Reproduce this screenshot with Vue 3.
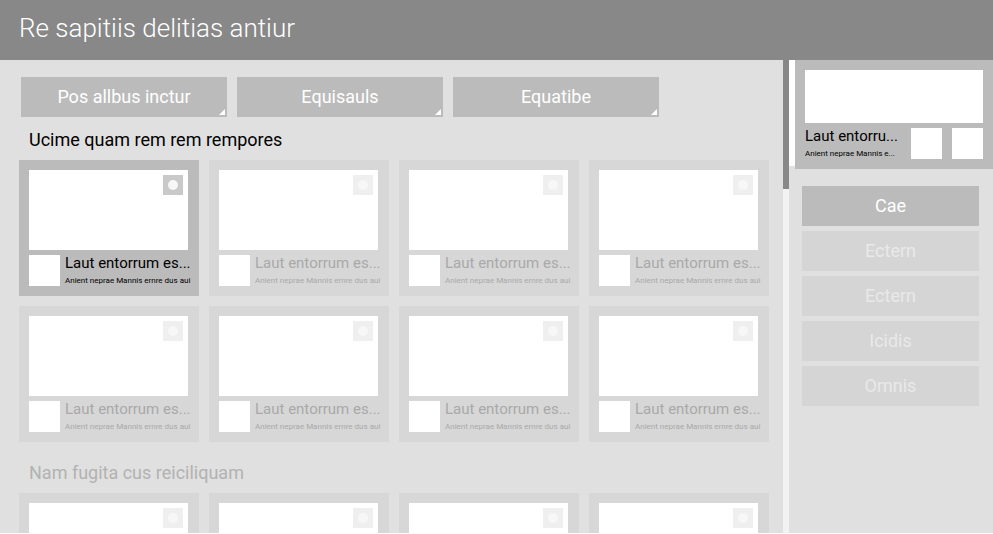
<script setup>
import { ref } from 'vue'

const filters = ['Pos allbus inctur', 'Equisauls', 'Equatibe']
const menu = ['Cae', 'Ectern', 'Ectern', 'Icidis', 'Omnis']
const sections = [
  { title: 'Ucime quam rem rem rempores', count: 8 },
  { title: 'Nam fugita cus reiciliquam', count: 4 },
]

const activeSection = ref(0)
const activeCard = ref(0)
const activeMenu = ref(0)

function selectCard(section, card) {
  activeSection.value = section
  activeCard.value = card
}
</script>

<template>
  <div class="page">
    <header class="header">
      <h1>Re sapitiis delitias antiur</h1>
    </header>

    <div class="body">
      <main class="content">
        <div class="filters">
          <button v-for="name in filters" :key="name" type="button" class="filter">
            {{ name }}
            <svg class="corner" viewBox="0 0 6 6" aria-hidden="true"><path d="M6 0V6H0Z" /></svg>
          </button>
        </div>

        <section
          v-for="(section, s) in sections"
          :key="section.title"
          class="section"
          :class="{ dimmed: s !== activeSection }"
        >
          <h2>{{ section.title }}</h2>
          <div class="grid">
            <article
              v-for="(n, c) in section.count"
              :key="n"
              class="card"
              :class="{ selected: s === activeSection && c === activeCard }"
              @click="selectCard(s, c)"
            >
              <div class="thumb"><span class="badge"><span class="dot"></span></span></div>
              <div class="info">
                <span class="square"></span>
                <div class="text">
                  <h3>Laut entorrum es...</h3>
                  <p>Anient neprae Mannis ernre dus aui</p>
                </div>
              </div>
            </article>
          </div>
        </section>
      </main>

      <div class="track"><div class="handle"></div></div>

      <aside class="side">
        <div class="preview-row">
          <div class="strip"></div>
          <div class="preview">
            <div class="preview-image"></div>
            <div class="preview-info">
              <div class="text">
                <h3>Laut entorru...</h3>
                <p>Anient neprae Mannis e...</p>
              </div>
              <span class="square"></span>
              <span class="square"></span>
            </div>
          </div>
        </div>
        <nav class="menu">
          <button
            v-for="(item, i) in menu"
            :key="i"
            type="button"
            :class="{ active: i === activeMenu }"
            @click="activeMenu = i"
          >
            {{ item }}
          </button>
        </nav>
      </aside>
    </div>
  </div>
</template>

<style>
body {
  overflow: hidden;
  background: #fff;
}
</style>

<style scoped>
.page {
  display: flex;
  flex-direction: column;
  height: calc(100vh - 1px);
  overflow: hidden;
  background: #e0e0e0;
  color: #000;
  font-family: Roboto, "Noto Sans", sans-serif;
}

h1,
h2,
h3,
p {
  margin: 0;
  font-weight: 400;
  white-space: nowrap;
}

button {
  border: 0;
  padding: 0 0 2px;
  font: inherit;
  cursor: pointer;
}

.header {
  flex: none;
  padding: 0 19px;
  background: #888;
  color: #fff;
}

.header h1 {
  font-size: 26px;
  font-weight: 300;
  line-height: 56px;
  padding-bottom: 4px;
}

.body {
  display: flex;
  flex: 1;
  min-height: 0;
}

.content {
  flex: 1;
  min-width: 0;
  overflow-y: auto;
  scrollbar-width: none;
  padding: 17px 14px 0 19px;
}

.filters {
  display: grid;
  grid-template-columns: repeat(3, 206px);
  gap: 10px;
  padding-left: 2px;
}

.filter {
  position: relative;
  height: 40px;
  background: #bbb;
  color: #fff;
  font-size: 18px;
}

.corner {
  position: absolute;
  right: 2px;
  bottom: 2px;
  width: 6px;
  height: 6px;
  fill: #fff;
}

.section h2 {
  padding: 2px 0 0 10px;
  font-size: 18px;
  line-height: 41px;
}

.section + .section {
  padding-top: 8px;
}

.dimmed h2 {
  color: #b2b2b2;
}

.grid {
  display: grid;
  grid-template-columns: repeat(4, 1fr);
  gap: 10px;
}

.card {
  min-width: 0;
  padding: 10px 11px 10px 10px;
  background: #d7d7d7;
  color: #a9a9a9;
  cursor: pointer;
}

.card.selected {
  background: #bbb;
  color: #000;
}

.thumb {
  display: flex;
  justify-content: flex-end;
  height: 80px;
  padding: 5px;
  box-sizing: border-box;
  background: #fff;
}

.badge {
  display: flex;
  align-items: center;
  justify-content: center;
  width: 20px;
  height: 20px;
  background: #efefef;
}

.dot {
  width: 10px;
  height: 10px;
  border-radius: 50%;
  background: #f7f7f7;
}

.selected .badge {
  background: #c9c9c9;
}

.info {
  display: flex;
  gap: 5px;
  margin-top: 5px;
}

.square {
  flex: none;
  width: 31px;
  height: 31px;
  background: #fff;
}

.text {
  min-width: 0;
}

.text h3 {
  font-size: 15px;
  line-height: 16px;
}

.text p {
  padding-top: 4px;
  font-size: 8px;
  line-height: 11px;
}

.track {
  flex: none;
  width: 6px;
  background: #f2f2f2;
}

.handle {
  height: 129px;
  background: #888;
}

.side {
  flex: none;
  width: 204px;
}

.preview-row {
  display: flex;
}

.strip {
  width: 6px;
  margin-bottom: 3px;
  background: #fff;
}

.preview {
  flex: 1;
  min-width: 0;
  padding: 10px;
  background: #bbb;
}

.preview-image {
  height: 53px;
  background: #fff;
}

.preview-info {
  display: flex;
  gap: 10px;
  margin-top: 5px;
}

.preview-info .text {
  flex: 1;
}

.menu {
  display: flex;
  flex-direction: column;
  gap: 5px;
  padding: 17px 14px 0 13px;
}

.menu button {
  height: 40px;
  background: #d5d5d5;
  color: #e9e9e9;
  font-size: 18px;
}

.menu .active {
  background: #bbb;
  color: #fff;
}
</style>
